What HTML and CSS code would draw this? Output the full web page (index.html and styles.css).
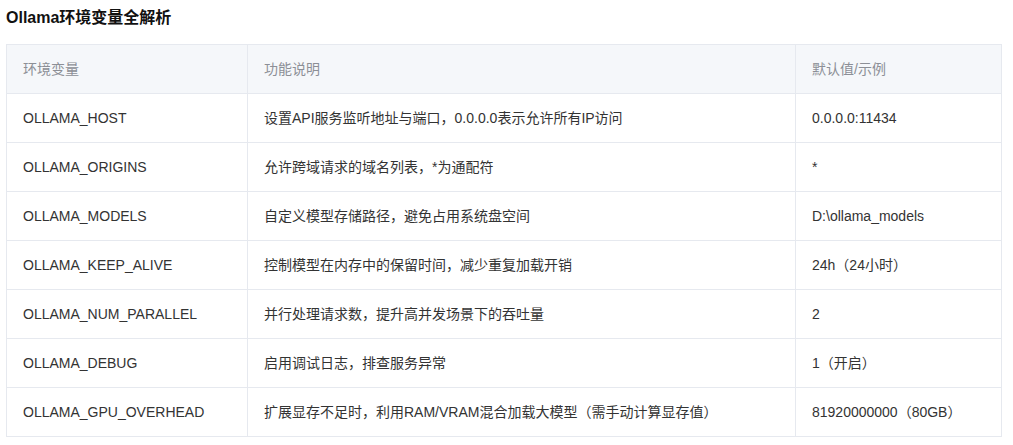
FILE: index.html
```html
<!DOCTYPE html>
<html lang="zh-CN">
<head>
<meta charset="utf-8">
<link rel="stylesheet" href="styles.css">
</head>
<body>
<div class="page">
  <h3 class="title">Ollama环境变量全解析</h3>
  <table class="env-table">
    <colgroup>
      <col class="c1"><col class="c2"><col class="c3">
    </colgroup>
    <thead>
      <tr><th>环境变量</th><th>功能说明</th><th>默认值/示例</th></tr>
    </thead>
    <tbody>
      <tr><td>OLLAMA_HOST</td><td>设置API服务监听地址与端口，0.0.0.0表示允许所有IP访问</td><td>0.0.0.0:11434</td></tr>
      <tr><td>OLLAMA_ORIGINS</td><td>允许跨域请求的域名列表，*为通配符</td><td>*</td></tr>
      <tr><td>OLLAMA_MODELS</td><td>自定义模型存储路径，避免占用系统盘空间</td><td>D:\ollama_models</td></tr>
      <tr><td>OLLAMA_KEEP_ALIVE</td><td>控制模型在内存中的保留时间，减少重复加载开销</td><td>24h（24小时）</td></tr>
      <tr><td>OLLAMA_NUM_PARALLEL</td><td>并行处理请求数，提升高并发场景下的吞吐量</td><td>2</td></tr>
      <tr><td>OLLAMA_DEBUG</td><td>启用调试日志，排查服务异常</td><td>1（开启）</td></tr>
      <tr><td>OLLAMA_GPU_OVERHEAD</td><td>扩展显存不足时，利用RAM/VRAM混合加载大模型（需手动计算显存值）</td><td>81920000000（80GB）</td></tr>
    </tbody>
  </table>
</div>
</body>
</html>
```
FILE: styles.css
```css
html, body {
  margin: 0;
  padding: 0;
  background: #ffffff;
}
.page {
  padding: 8px 12px 0 6px;
  font-family: "Liberation Sans", "Noto Sans CJK SC", Arial, sans-serif;
}
.title {
  margin: 0 0 16px 0;
  font-size: 16px;
  line-height: 20px;
  font-weight: bold;
  color: #111111;
}
.env-table {
  width: 995px;
  border-collapse: collapse;
  table-layout: fixed;
  font-size: 14px;
}
.c1 { width: 241px; }
.c2 { width: 548px; }
.c3 { width: 206px; }
.env-table th,
.env-table td {
  border: 1px solid #e6e9ef;
  height: 48px;
  padding: 0 16px;
  text-align: left;
  vertical-align: middle;
  line-height: 18px;
  white-space: nowrap;
}
.env-table th {
  background: #f5f7fa;
  color: #8c8f96;
  font-weight: normal;
}
.env-table td {
  color: #333333;
}
```
